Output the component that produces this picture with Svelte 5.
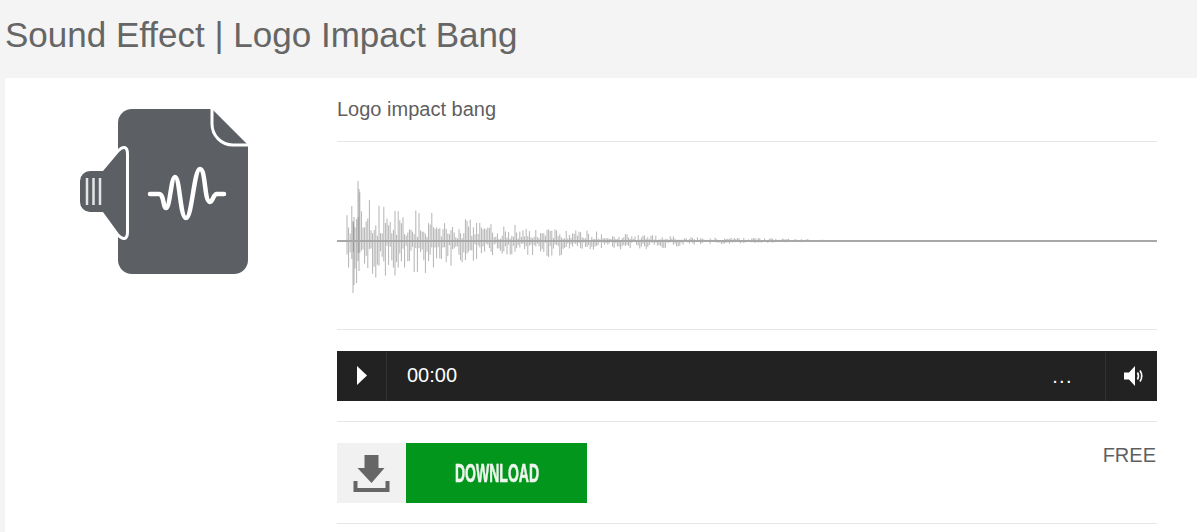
<script>
  // seeded noise so the waveform stays the same between runs
  let seed = 23;
  function rnd() {
    seed = (seed * 16807) % 2147483647;
    return seed / 2147483647;
  }

  // [x, height above axis, height below axis]
  const shape = [
    [8, 32, 24], [12, 34, 36], [16, 46, 53], [21, 60, 50], [28, 46, 42], [40, 36, 38],
    [67, 34, 38], [100, 28, 28], [160, 18, 15], [210, 12, 17], [260, 10, 8], [310, 6, 9],
    [360, 4, 3.500], [420, 3, 2], [485, 1.500, 1]
  ];

  function envelope(x, i) {
    for (let k = 1; k < shape.length; k++) {
      if (x <= shape[k][0]) {
        const a = shape[k - 1];
        const b = shape[k];
        return a[i] + ((x - a[0]) / (b[0] - a[0])) * (b[i] - a[i]);
      }
    }
    return 0.5;
  }

  // a few samples reach the envelope, most stay well under it
  function sample() {
    const r = rnd();
    if (r < 0.22) return 0.8 + rnd() * 0.2;
    if (r < 0.6) return 0.4 + rnd() * 0.3;
    return 0.1 + rnd() * 0.25;
  }

  const bars = [];
  for (let x = 8; x < 488; x += 1.6) {
    bars.push({ x: x + 2, up: envelope(x, 1) * sample(), down: envelope(x, 2) * sample() });
  }
  // the first hit stands out from the rest
  bars.push({ x: 21, up: 60, down: 20 }, { x: 22, up: 52, down: 30 }, { x: 16, up: 20, down: 52 }, { x: 17, up: 24, down: 44 });
</script>

<div class="page">
  <h1>Sound Effect | Logo Impact Bang</h1>
  <div class="panel">
    <div class="thumb">
      <svg width="170" height="168" viewBox="0 0 170 168">
        <path class="file" d="M39 15a14 14 0 0 1 14-14h80l36 36v115a14 14 0 0 1-14 14H53a14 14 0 0 1-14-14Z" />
        <path class="line" d="M133 0v16a21 21 0 0 0 21 21h16" />
        <path class="cone" d="M24 63L40 44Q47 37 47 46V124Q47 133 40 126L24 104H11a10 10 0 0 1-10-10V73a10 10 0 0 1 10-10Z" />
        <path class="bars" d="M8 70v27M14.500 70v27M21 70v27" />
        <path class="wave" d="M71 86H80C85 86 84 100 87 100C91 100 92 69 96 69C101 69 101 110 107 110C113 110 115 61 121 61C127 61 125 94 131 94C134 94 134 86 138 86H145" />
      </svg>
    </div>
    <div class="main">
      <p class="name">Logo impact bang</p>
      <div class="wavebox">
        <svg width="820" height="187" viewBox="0 0 820 187">
          <g class="peaks">
            {#each bars as b}
              <line x1={b.x} x2={b.x} y1={99 - b.up} y2={99 + b.down} />
            {/each}
          </g>
          <rect class="axis" x="0" y="98" width="820" height="2" />
        </svg>
      </div>
      <div class="player">
        <div class="btn">
          <svg width="12" height="20" viewBox="0 0 12 20"><path d="M1 0l10 9.500L1 19Z" /></svg>
        </div>
        <span class="time">00:00</span>
        <span class="rail"></span>
        <span class="dots">...</span>
        <div class="btn vol">
          <svg width="21" height="21" viewBox="0 0 21 21">
            <path d="M0 6.500h5L11 0v20l-6-6.500H0Z" />
            <path class="sw" d="M13.500 6.500q2 3.500 0 7M16 4.500q3.500 5.500 0 11" />
          </svg>
        </div>
      </div>
      <div class="actions">
        <a class="download" href="#dl">
          <span class="dl-icon">
            <svg width="37" height="37" viewBox="0 0 37 37">
              <path class="arrow" d="M11.500 0h14v13h6L18.500 28 4.500 13h7Z" />
              <path class="tray" d="M2.500 26v9h32v-9" />
            </svg>
          </span>
          <span class="dl-text"><span>DOWNLOAD</span></span>
        </a>
        <span class="price">FREE</span>
      </div>
    </div>
  </div>
</div>

<style>
  :global(body) {
    margin: 0;
    background: #f4f4f4;
  }

  .page {
    height: 532px;
    overflow: hidden;
    font-family: "Liberation Sans", Arial, sans-serif;
    color: #5f5f5f;
  }

  h1 {
    margin: 0;
    height: 78px;
    padding: 15px 0 0 5px;
    box-sizing: border-box;
    font-size: 35px;
    line-height: 40px;
    font-weight: 400;
    color: #666;
  }

  .panel {
    display: flex;
    margin-left: 5px;
    height: 454px;
    background: #fff;
  }

  .thumb {
    width: 332px;
    padding: 30px 0 0 74px;
    box-sizing: border-box;
  }

  .thumb svg {
    display: block;
    filter: blur(0.4px);
  }

  .file { fill: #5c6064; }
  .line { fill: none; stroke: #fff; stroke-width: 3; }
  .cone {
    fill: #5c6064;
    stroke: #fff;
    stroke-width: 6;
    paint-order: stroke;
  }
  .bars { fill: none; stroke: #e4e5e6; stroke-width: 2.500; }
  .wave {
    fill: none;
    stroke: #fff;
    stroke-width: 4.500;
    stroke-linecap: round;
    stroke-linejoin: round;
  }

  .main {
    width: 820px;
  }

  .name {
    margin: 0;
    height: 64px;
    padding-top: 19px;
    box-sizing: border-box;
    border-bottom: 1px solid #e6e6e6;
    font-size: 20px;
    line-height: 24px;
  }

  .wavebox {
    height: 187px;
    border-bottom: 1px solid #e6e6e6;
    margin-bottom: 21px;
  }

  .wavebox svg {
    display: block;
    filter: blur(0.5px);
  }

  .peaks line {
    stroke: #808080;
    stroke-width: 1;
    stroke-opacity: 0.6;
  }
  .axis { fill: #a8a8a8; }

  .player {
    display: flex;
    align-items: center;
    height: 50px;
    background: #222;
    color: #fff;
    font-size: 20px;
  }

  .btn {
    display: flex;
    align-items: center;
    justify-content: center;
    width: 50px;
    height: 49px;
    box-sizing: border-box;
    border-right: 1px solid #333;
  }

  .btn svg { fill: #fff; }
  .vol {
    width: 52px;
    padding-left: 6px;
    border-right: 0;
    border-left: 1px solid #333;
  }
  .sw { fill: none; stroke: #fff; stroke-width: 1.600; }

  .time {
    margin-left: 20px;
    padding-bottom: 2px;
  }

  .rail { flex: 1; }

  .dots {
    margin-right: 32px;
    letter-spacing: 1.400px;
  }

  .actions {
    display: flex;
    justify-content: space-between;
    margin-top: 20px;
    padding: 21px 0 20px;
    border-top: 1px solid #e6e6e6;
    border-bottom: 1px solid #e6e6e6;
  }

  .download {
    display: flex;
    width: 250px;
    height: 60px;
    text-decoration: none;
  }

  .dl-icon {
    display: flex;
    align-items: center;
    justify-content: center;
    width: 69px;
    background: #f1f1f1;
  }

  .arrow { fill: #666; }
  .tray { fill: none; stroke: #666; stroke-width: 4; }

  .dl-text {
    flex: 1;
    display: flex;
    align-items: center;
    justify-content: center;
    background: #02961c;
    color: #eef5ee;
    font-weight: 700;
    font-size: 26px;
  }

  .dl-text span {
    display: block;
    transform: scaleX(0.54);
    -webkit-text-stroke: 0.6px #eef5ee;
  }

  .price {
    font-size: 20px;
    line-height: 24px;
    margin-right: 1px;
  }
</style>
